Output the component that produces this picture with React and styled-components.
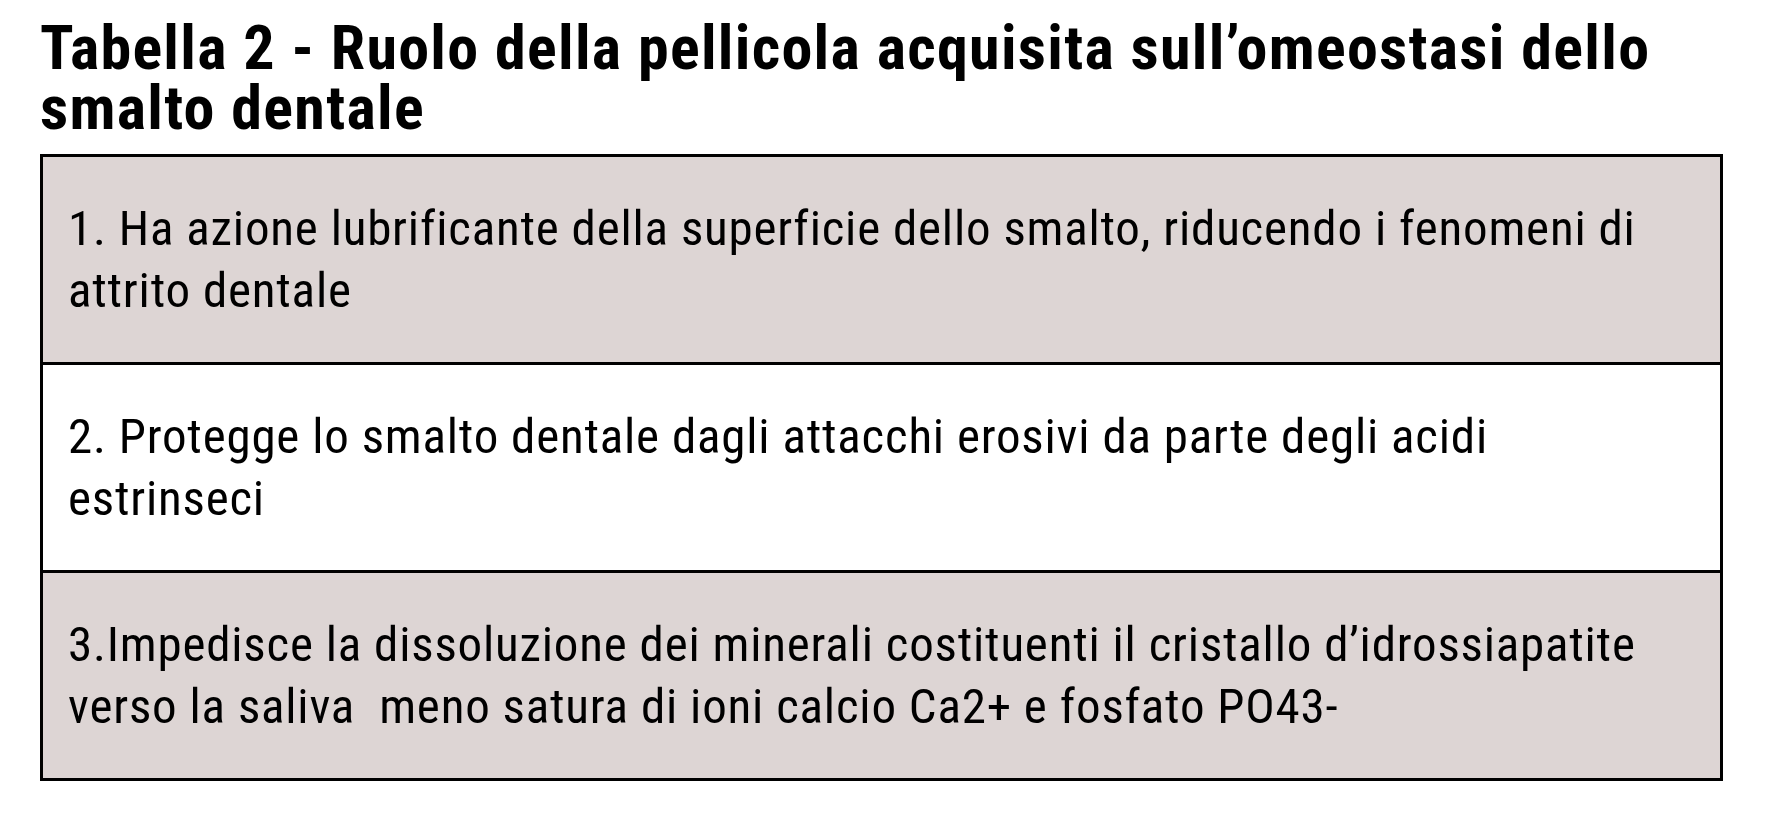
import React from 'react';
import styled, { createGlobalStyle } from 'styled-components';

const GlobalStyle = createGlobalStyle`
  html, body {
    margin: 0;
    padding: 0;
    background: #ffffff;
  }
  body {
    font-family: "Roboto Condensed", "Roboto", "Liberation Sans", sans-serif;
    color: #000000;
  }
`;

const Page = styled.div`
  width: 1766px;
  padding: 18px 43px 0 40px;
  box-sizing: border-box;
`;

// titolo in grassetto condensato
const Title = styled.h1`
  margin: 0 0 16px 0;
  font-family: "Roboto Condensed", "Roboto", sans-serif;
  font-weight: 700;
  font-size: 62px;
  line-height: 60px;
  letter-spacing: 1.3px;
  white-space: nowrap;
`;

const Table = styled.div`
  display: flex;
  flex-direction: column;
  border: 3px solid #000000;
`;

const Row = styled.div`
  padding: 41px 20px 40px 25px;
  background: ${props => (props.$shaded ? '#ddd5d4' : '#ffffff')};
  border-top: ${props => (props.$first ? 'none' : '3px solid #000000')};
  font-size: 49px;
  line-height: 62px;
  letter-spacing: 0.8px;
  white-space: nowrap;
`;

const rows = [
  {
    shaded: true,
    lines: ['1. Ha azione lubrificante della superficie dello smalto, riducendo i fenomeni di', 'attrito dentale'],
  },
  {
    shaded: false,
    lines: ['2. Protegge lo smalto dentale dagli attacchi erosivi da parte degli acidi', 'estrinseci'],
  },
  {
    shaded: true,
    lines: ['3.Impedisce la dissoluzione dei minerali costituenti il cristallo d\u2019idrossiapatite', 'verso la saliva\u00a0 meno satura di ioni calcio Ca2+ e fosfato PO43-'],
  },
];

export default function App() {
  return (
    <Page>
      <GlobalStyle />
      <Title>
        Tabella 2 - Ruolo della pellicola acquisita sull&rsquo;omeostasi dello<br />
        smalto dentale
      </Title>
      <Table>
        {rows.map((row, i) => (
          <Row key={i} $shaded={row.shaded} $first={i === 0}>
            {row.lines[0]}<br />
            {row.lines[1]}
          </Row>
        ))}
      </Table>
    </Page>
  );
}
